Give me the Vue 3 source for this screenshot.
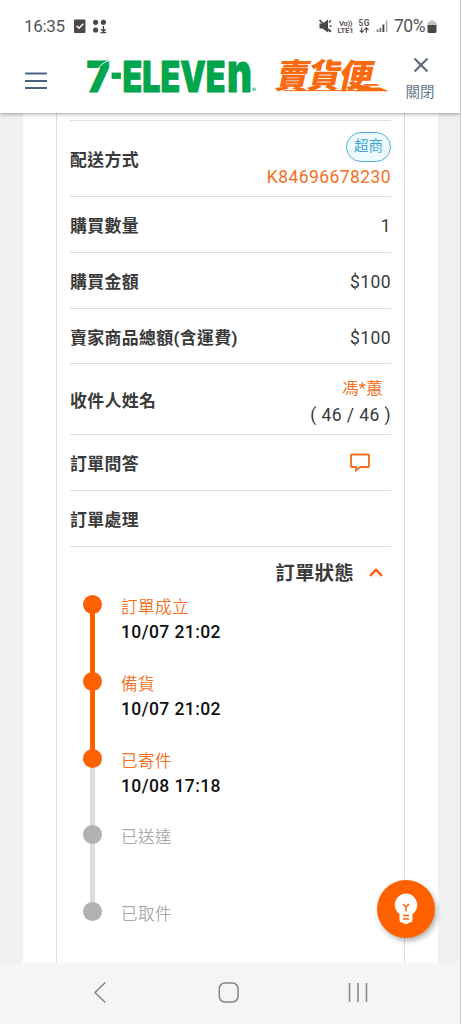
<script setup>
const rows = [
  { label: '配送方式', kind: 'ship', h: 76 },
  { label: '購買數量', value: '1', h: 56 },
  { label: '購買金額', value: '$100', h: 56 },
  { label: '賣家商品總額(含運費)', value: '$100', h: 55 },
  { label: '收件人姓名', kind: 'name', h: 71 },
  { label: '訂單問答', kind: 'chat', h: 56 },
  { label: '訂單處理', h: 56 },
]
const steps = [
  { title: '訂單成立', time: '10/07 21:02', done: true, line: 'on' },
  { title: '備貨', time: '10/07 21:02', done: true, line: 'on' },
  { title: '已寄件', time: '10/08 17:18', done: true, line: 'off' },
  { title: '已送達', line: 'off' },
  { title: '已取件' },
]
</script>

<template>
  <div class="screen">
    <header class="header">
      <div class="status">
        <span class="clock">16:35</span>
        <svg class="st-left" width="30" height="16" viewBox="73 19 30 16">
          <rect x="74" y="19.5" width="11.4" height="13.5" rx="1" fill="#484848" />
          <path d="M76.6 25.8l2.4 2.4 4.3-4.4" fill="none" stroke="#fff" stroke-width="1.6" />
          <g fill="#484848">
            <circle cx="95.6" cy="22.3" r="2.6" />
            <circle cx="95.6" cy="30" r="2.6" />
          </g>
        </svg>
        <svg class="st-dots" width="10" height="16" viewBox="99 19 10 16">
          <circle cx="103.4" cy="22.3" r="2.6" fill="#484848" />
          <path d="M103.4 26v5M101.2 29.2l2.2 2.3 2.2-2.3M100.6 32.6h5.6" fill="none" stroke="#484848" stroke-width="1.4" />
        </svg>
        <svg class="st-right" width="72" height="18" viewBox="317 17 72 18">
          <path d="M319.500 23.500h3l5.500-4v13l-5.500-4h-3z" fill="#484848" />
          <path d="M319.500 20l11 12" stroke="#484848" stroke-width="1.8" />
          <path d="M329 22.500l2-2M329.500 26h2M329 29.500l2 2" stroke="#484848" stroke-width="1.5" />
          <text x="339" y="25.6" font-size="7.6" textLength="13.5" class="tiny">Vo))</text>
          <text x="337.5" y="32.7" font-size="7.6" textLength="16" class="tiny">LTE1</text>
          <text x="358.5" y="25.8" font-size="8.4" textLength="11" class="tiny">5G</text>
          <path d="M361.8 27.5v4.8M359.8 30.4l2 2 2-2M366.4 32.8V28M364.4 29.8l2-2 2 2" fill="none" stroke="#484848" stroke-width="1.1" />
          <path d="M377.6 32v-2.5M380.4 32v-4.3" stroke="#777" stroke-width="1.8" />
          <path d="M383.4 32v-7.5" stroke="#484848" stroke-width="1.9" />
          <path d="M386.6 32V20.5" stroke="#aaa" stroke-width="1.5" />
        </svg>
        <span class="pct">70%</span>
        <svg class="batt" width="10" height="14" viewBox="0 0 10 14">
          <path d="M3 .5h4V2h1.3Q9.5 2 9.5 3.2V5H.5V3.2Q.5 2 1.700 2H3z" fill="#c3c3c3" />
          <path d="M.5 5h9v6.700q0 1.300-1.300 1.300H1.800Q.5 13 .5 11.700z" fill="#484848" />
        </svg>
      </div>
      <div class="brandbar">
        <svg class="menu" width="22" height="18" viewBox="0 0 22 18">
          <path d="M0 1.500h22M0 9h22M0 16h22" stroke="#4a6080" stroke-width="2" />
        </svg>
        <svg class="logo" width="310" height="90" viewBox="80 30 310 90">
          <g class="green">
            <text transform="translate(86.500 91.500) scale(.93 1)" font-size="42">7</text>
            <rect x="112" y="73" width="8.500" height="5.500" />
            <text transform="translate(122.500 91.500)" font-size="42" textLength="103" lengthAdjust="spacingAndGlyphs">ELEVE</text>
            <text transform="translate(227 91.500) scale(.7 1)" font-size="55">n</text>
            <circle cx="254" cy="89.300" r="1.600" opacity=".5" />
          </g>
          <path d="M97.500 70q3.500-7 11.500-9.500" fill="none" stroke="#fff" stroke-width="1" />
          <text transform="translate(274 88.200) skewX(-12)" font-size="33.500" textLength="97" class="mai">賣貨便</text>
          <path d="M364 84h13l3 1.800h-16zM360 87.600h20l9 3.600h-34z" fill="#f9690e" />
          <path d="M284 90.600h76" stroke="#f9690e" stroke-width="1" />
        </svg>
        <div class="close">
          <svg width="16" height="16" viewBox="0 0 16 16"><path d="M1.500 1.500l13 13M14.500 1.500l-13 13" stroke="#5d6b80" stroke-width="2.200" /></svg>
          <span>關閉</span>
        </div>
      </div>
    </header>

    <main class="page">
      <div class="sheet">
        <section class="card">
          <div class="lead"></div>
          <div v-for="r in rows" :key="r.label" class="row" :style="{ height: r.h + 'px' }">
            <b class="label">{{ r.label }}</b>
            <div v-if="r.kind === 'ship'" class="ship">
              <span class="badge">超商</span>
              <span class="orange">K84696678230</span>
            </div>
            <div v-else-if="r.kind === 'name'" class="name">
              <span class="orange who">馮*蕙</span>
              <span>( 46 / 46 )</span>
            </div>
            <svg v-else-if="r.kind === 'chat'" class="chat" width="20" height="19" viewBox="0 0 20 19">
              <path d="M1.800 1.500h16.400q.8 0 .8.800v10.900q0 .8-.8.800H10.500L6 17.300V14H1.800q-.8 0-.8-.8V2.300q0-.8.800-.8z" fill="none" stroke="#f4701f" stroke-width="1.900" />
            </svg>
            <span v-else>{{ r.value }}</span>
          </div>
          <div class="state">
            <b>訂單狀態</b>
            <svg width="14" height="9" viewBox="0 0 14 9"><path d="M1 7.800L7 1.800l6 6" fill="none" stroke="#f9651a" stroke-width="2.500" /></svg>
          </div>
          <div class="timeline">
            <div v-for="s in steps" :key="s.title" class="step" :class="{ done: s.done }">
              <div class="track"><i class="dot"></i><i v-if="s.line" class="line" :class="s.line"></i></div>
              <div class="info"><span class="title">{{ s.title }}</span><span v-if="s.time" class="time">{{ s.time }}</span></div>
            </div>
          </div>
        </section>
      </div>
    </main>

    <button class="fab">
      <svg width="24" height="32" viewBox="0 0 24 32">
        <path d="M12 .5a11.300 11.300 0 0 0-6.500 20.500v6q0 2 2 2.500h1.500l1.500 1.500h3l1.500-1.500h1.500q2-.5 2-2.500v-6A11.300 11.300 0 0 0 12 .5z" fill="#fff" />
        <path d="M9 11l3 3 3-3M12 14v4.500M9 22.500h6M9 26h6" fill="none" stroke="#ff6000" stroke-width="1.500" />
      </svg>
    </button>

    <nav class="nav">
      <svg width="461" height="61" viewBox="0 963 461 61" fill="none" stroke="#858585" stroke-width="1.500">
        <path d="M105.300 982.500l-10.300 10 10.300 10" />
        <rect x="219.300" y="983" width="18.700" height="19" rx="5.500" />
        <path d="M349.500 983v19M358 983v19M366.500 983v19" />
      </svg>
    </nav>
    <div class="edge"></div>
  </div>
</template>

<style>
body { margin: 0; overflow: hidden; }
</style>
<style scoped>
.screen { position: relative; width: 461px; height: 1024px; overflow: hidden; display: flex; flex-direction: column; background: #f0f2f2; color: #3a3a3a; font: 17.500px/1.5 Roboto, "Noto Sans CJK TC", sans-serif; letter-spacing: .42px; }
.header { position: relative; z-index: 2; flex: none; height: 113px; background: #fff; box-shadow: 0 1px 4px rgba(0,0,0,.38); }
.status { height: 50px; display: flex; align-items: flex-start; color: #555; letter-spacing: 0; line-height: 20px; }
.clock { width: 42px; margin: 16px 0 0 24px; font-size: 17px; letter-spacing: -.3px; }
.st-left { margin: 19px 0 0 7px; }
.st-dots { margin: 19px 0 0 -4px; }
.st-right { margin: 17px 0 0 208px; }
.tiny { font-family: Roboto, sans-serif; font-weight: 700; fill: #585858; letter-spacing: 0; }
.pct { width: 32px; margin: 16px 0 0 5px; font-size: 17.500px; letter-spacing: -.5px; }
.batt { margin: 20px 0 0 1px; }
.brandbar { display: flex; height: 63px; }
.menu { margin: 22px 33px 0 25px; }
.logo { flex: none; margin-top: -20px; }
.green { fill: #00a54c; stroke: #00a54c; stroke-width: .8; font-family: Inter, sans-serif; font-weight: 900; letter-spacing: 0; }
.mai { fill: #f9690e; font-family: "Noto Sans CJK TC", sans-serif; font-weight: 900; letter-spacing: 0; }
.close { width: 62px; display: flex; flex-direction: column; align-items: center; color: #66788c; font-size: 14.5px; line-height: 20px; letter-spacing: 0; }
.close svg { margin: 7px 0 10px 0; }
.close span { margin-right: 2px; }
.page { flex: none; height: 850px; display: flex; justify-content: center; overflow: hidden; }
.sheet { width: 415px; background: #fff; display: flex; }
.card { width: 321px; height: 850px; margin-left: 33px; padding: 0 13px; border: solid #ddd; border-width: 0 1px; }
.lead { height: 7px; border-bottom: 1px solid #ddd; }
.row { box-sizing: border-box; border-bottom: 1px solid #ddd; display: flex; justify-content: space-between; align-items: center; padding-top: 4px; }
.label { margin-top: 1px; font-size: 16.900px; font-weight: 700; letter-spacing: .35px; }
.orange { color: #f4701f; }
.ship, .name { display: flex; flex-direction: column; align-items: flex-end; line-height: 26px; }
.badge { box-sizing: border-box; width: 45px; height: 30px; margin-bottom: 2px; border: 1.500px solid #51afda; border-radius: 15px; background: #effaff; color: #45a8d4; font-size: 14.500px; line-height: 28px; text-align: center; letter-spacing: 0; }
.name { padding-top: 2px; }
.who { margin-right: 8px; font-size: 16.300px; }
.chat { margin: -4px 21px 0 0; }
.state { height: 48px; display: flex; justify-content: flex-end; align-items: center; font-size: 19.200px; }
.state b { margin-top: 6px; }
.state svg { margin: 3px 8px 0 15px; }
.step { display: flex; height: 76.800px; }
.track { position: relative; width: 19px; margin-left: 13px; }
.dot { position: relative; z-index: 1; display: block; width: 19px; height: 19px; border-radius: 50%; background: #b1b1b1; }
.done .dot { background: #ff6000; }
.line { position: absolute; left: 7px; top: 10px; width: 5px; height: 77px; background: #ddd; }
.line.on { background: #ff6000; }
.info { margin: 0 0 0 19px; display: flex; flex-direction: column; line-height: 25.200px; }
.title { color: #a9a9a9; font-size: 16.600px; font-weight: 350; }
.done .title { color: #f4701f; }
.time { color: #111; font-weight: 500; }
.fab { position: absolute; z-index: 3; left: 377px; top: 880px; width: 58px; height: 58px; padding: 0; border: 0; border-radius: 50%; background: #ff6000; box-shadow: 2px 3px 5px rgba(0,0,0,.3); display: flex; align-items: center; justify-content: center; }
.nav { position: relative; z-index: 1; height: 61px; background: #f5f5f5; }
.nav svg { display: block; }
.edge { position: absolute; z-index: 4; right: 0; top: 0; width: 1px; height: 1024px; background: #c9c9c9; }
</style>
